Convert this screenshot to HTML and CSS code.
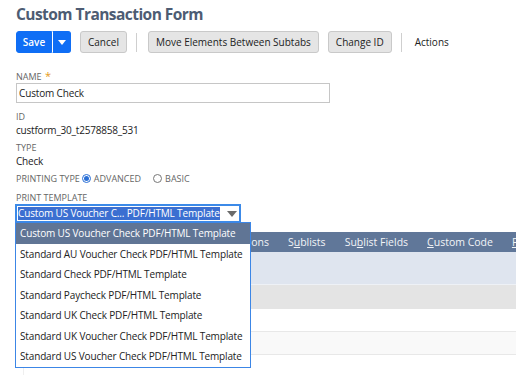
FILE: index.html
```html
<!DOCTYPE html>
<html lang="en">
<head>
<meta charset="utf-8">
<title>Custom Transaction Form</title>
<link rel="stylesheet" href="styles.css">
</head>
<body>
<div class="page">
  <h1 class="title">Custom Transaction Form</h1>
  <div class="toolbar">
    <div class="split">
      <button class="btn primary">Save</button>
      <button class="btn primary caret"><svg width="8" height="5" viewBox="0 0 8 5"><path d="M0 0h8L4 5z" fill="#fff"/></svg></button>
    </div>
    <button class="btn">Cancel</button>
    <span class="sep"></span>
    <button class="btn">Move Elements Between Subtabs</button>
    <button class="btn">Change ID</button>
    <span class="sep"></span>
    <span class="actions">Actions</span>
  </div>

  <div class="fields">
    <div class="field f-input">
      <div class="label">NAME <span class="req">*</span></div>
      <div class="input">Custom Check</div>
    </div>
    <div class="field f-value">
      <div class="label">ID</div>
      <div class="value">custform_30_t2578858_531</div>
    </div>
    <div class="field f-value">
      <div class="label">TYPE</div>
      <div class="value">Check</div>
    </div>
    <div class="field radios">
      <span class="label">PRINTING TYPE</span>
      <span class="radio on"></span><span class="label opt">ADVANCED</span>
      <span class="radio second"></span><span class="label opt">BASIC</span>
    </div>
    <div class="field">
      <div class="label">PRINT TEMPLATE</div>
      <div class="select-wrap">
        <div class="select">
          <span class="sel-text">Custom US Voucher C... PDF/HTML Template</span>
          <svg class="arrow" width="10" height="6" viewBox="0 0 10 6"><path d="M0 0h10L5 6z" fill="#6b6b6b"/></svg>
        </div>
        <ul class="menu">
          <li class="active">Custom US Voucher Check PDF/HTML Template</li>
          <li>Standard AU Voucher Check PDF/HTML Template</li>
          <li>Standard Check PDF/HTML Template</li>
          <li>Standard Paycheck PDF/HTML Template</li>
          <li>Standard UK Check PDF/HTML Template</li>
          <li>Standard UK Voucher Check PDF/HTML Template</li>
          <li>Standard US Voucher Check PDF/HTML Template</li>
        </ul>
      </div>
    </div>
  </div>

  <div class="subtabs">
    <span class="tab">Screen Fields</span>
    <span class="tab">Actions</span>
    <span class="tab">S<u>u</u>blists</span>
    <span class="tab">Su<u>b</u>list Fields</span>
    <span class="tab"><u>C</u>ustom Code</span>
    <span class="tab"><u>P</u>rinting Fields</span>
  </div>
  <div class="band"></div>
  <div class="head-row"></div>
  <div class="row"></div>
  <div class="row alt"></div>
  <div class="row last"></div>
</div>
</body>
</html>
```

FILE: styles.css
```css
* { box-sizing: border-box; }
html, body { margin: 0; padding: 0; background: #fff; overflow: hidden; }
body { font-family: "Open Sans", "Noto Sans", sans-serif; color: #222; }
.page { width: 516px; height: 375px; padding: 3px 0 0 16px; overflow: hidden; }

.title {
  margin: 0;
  font-size: 15.5px;
  letter-spacing: -0.55px;
  line-height: 23px;
  font-weight: 700;
  color: #4d5c73;
}

.toolbar {
  display: flex;
  align-items: center;
  margin-top: 5px;
  height: 22px;
}
.split { display: flex; margin-right: 9px; }
.btn {
  height: 22px;
  padding: 0 7px;
  font-family: inherit;
  font-size: 10px;
  color: #222;
  background: #e5e5e5;
  border: 1px solid #c9c9c9;
  border-radius: 3px;
  margin-right: 9px;
}
.btn.primary {
  background: #0f6ef5;
  border-color: #0f6ef5;
  color: #fff;
  font-weight: 600;
  margin: 0;
  border-radius: 3px 0 0 3px;
  width: 36px;
  padding: 0;
}
.btn.primary.caret {
  width: 19px;
  border-left: 1px solid #fff;
  border-radius: 0 3px 3px 0;
  display: flex;
  align-items: center;
  justify-content: center;
}
.sep {
  width: 1px;
  height: 19px;
  background: #cfcfcf;
  margin: 0 11px 0 0;
}
.actions { font-size: 10px; margin-left: 2px; color: #222; }

.fields { margin-top: 16px; }
.field { margin-bottom: 6px; }
.f-input { margin-bottom: 7px; }
.f-value { margin-bottom: 4px; }
.label {
  font-size: 9px;
  color: #666;
  line-height: 13px;
}
.req { color: #e69a17; font-size: 11px; margin-left: 1px; }
.input {
  width: 314px;
  height: 20px;
  border: 1px solid #c6c6c6;
  font-size: 10px;
  letter-spacing: -0.15px;
  line-height: 18px;
  padding: 0 2px;
  color: #222;
}
.value { font-size: 10px; letter-spacing: -0.2px; line-height: 14px; color: #222; }

.radios { display: flex; align-items: center; height: 13px; margin-bottom: 6px; }
.radio {
  width: 9px; height: 9px;
  border: 1px solid #777;
  border-radius: 50%;
  margin: 0 3px 0 2px;
  position: relative;
}
.radio.second { margin-left: 12px; }
.radio.on { border-color: #2a6fd6; }
.radio.on::after {
  content: ""; position: absolute; left: 1px; top: 1px;
  width: 5px; height: 5px; border-radius: 50%; background: #2a6fd6;
}

.select-wrap { position: relative; width: 226px; margin-left: -1px; }
.select {
  height: 19px;
  border: 2px solid #3c8ae8;
  display: flex;
  align-items: center;
  padding-left: 1px;
  background: #fff;
}
.sel-text {
  background: #3b6fd1;
  color: #fff;
  font-size: 10px;
  letter-spacing: -0.15px;
  line-height: 13px;
  white-space: nowrap;
}
.arrow { margin-left: 7px; }
.menu {
  position: absolute;
  left: 0; top: 18px;
  width: 236px;
  margin: 0; padding: 0;
  list-style: none;
  background: #fff;
  border: 1.5px solid #3c86e6;
  z-index: 5;
}
.menu li {
  height: 20.5px;
  line-height: 20px;
  padding-left: 4px;
  font-size: 10px;
  letter-spacing: -0.15px;
  color: #222;
  white-space: nowrap;
}
.menu li.active { background: #607595; color: #fff; }

.subtabs {
  display: flex;
  margin-top: 9px;
  height: 20px;
  background: #607799;
  padding-left: 134px;
  white-space: nowrap;
  overflow: hidden;
}
.tab {
  color: #f2f4f7;
  font-size: 10.5px;
  line-height: 20px;
  margin-right: 19px;
  flex: none;
}
.tab u { text-decoration: underline; text-underline-offset: 1px; }
.band { height: 33px; background: #dfe5ef; border-bottom: 1px solid #eef1f6; }
.head-row { height: 24px; background: #e4e4e4; }
.row { height: 23px; background: #fff; border-bottom: 1px solid #e8e8e8; }
.row.alt { background: #f9f9f9; }
.row.last { border-bottom: 0; margin-left: 7px; border-left: 1px solid #efefef; }
```
